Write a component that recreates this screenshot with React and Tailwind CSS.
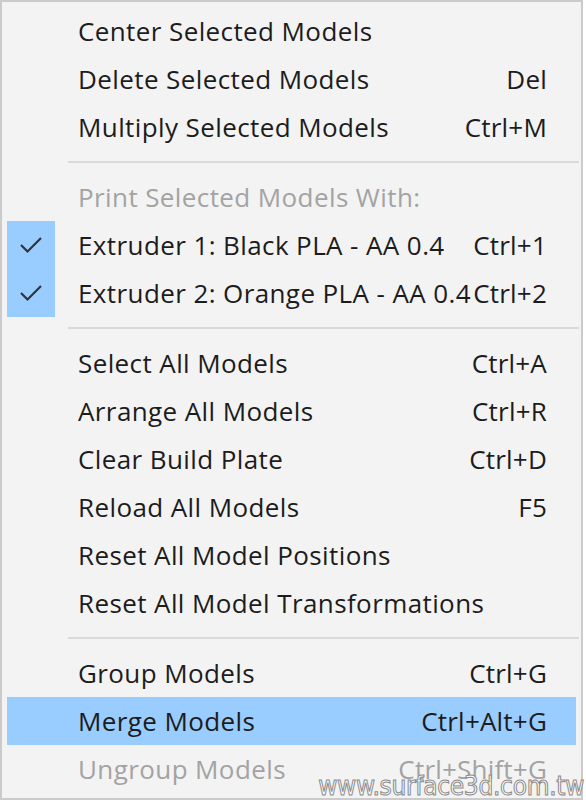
import React from 'react';

const items = [
    { label: 'Center Selected Models' },
    { label: 'Delete Selected Models', shortcut: 'Del' },
    { label: 'Multiply Selected Models', shortcut: 'Ctrl+M' },
    { sep: true },
    { label: 'Print Selected Models With:', disabled: true },
    { label: 'Extruder 1: Black PLA - AA 0.4', shortcut: 'Ctrl+1', checked: true },
    { label: 'Extruder 2: Orange PLA - AA 0.4', shortcut: 'Ctrl+2', checked: true },
    { sep: true },
    { label: 'Select All Models', shortcut: 'Ctrl+A' },
    { label: 'Arrange All Models', shortcut: 'Ctrl+R' },
    { label: 'Clear Build Plate', shortcut: 'Ctrl+D' },
    { label: 'Reload All Models', shortcut: 'F5' },
    { label: 'Reset All Model Positions' },
    { label: 'Reset All Model Transformations' },
    { sep: true },
    { label: 'Group Models', shortcut: 'Ctrl+G' },
    { label: 'Merge Models', shortcut: 'Ctrl+Alt+G', active: true },
    { label: 'Ungroup Models', shortcut: 'Ctrl+Shift+G', disabled: true },
];

function Check() {
    return (
        <svg width="24" height="18" viewBox="0 0 24 18" fill="none">
            <polyline points="2,9 8.5,15.5 22,2" stroke="#333" strokeWidth="2.2" />
        </svg>
    );
}

function MenuRow({ item }) {
    const textColor = item.disabled ? 'text-[#a3a3a3]' : 'text-[#1c1c1c]';
    return (
        <div className={`h-[48px] mx-[5px] flex items-center ${item.active ? 'bg-[#99ccff]' : ''}`}>
            <div className={`w-[48px] h-full shrink-0 flex items-center justify-center ${item.checked ? 'bg-[#99ccff]' : ''}`}>
                {item.checked && <Check />}
            </div>
            <span className={`ml-[23px] flex-1 min-w-0 whitespace-nowrap ${textColor}`}>{item.label}</span>
            {item.shortcut && (
                <span className={`shrink-0 pr-[29px] whitespace-nowrap tracking-[0.2px] ${textColor}`}>{item.shortcut}</span>
            )}
        </div>
    );
}

export default function App() {
    return (
        <div className="w-[586px] h-[800px] bg-white relative overflow-hidden">
            <div
                className="w-[583px] h-[800px] border-2 border-[#cbcbcb] bg-[#f3f3f3] pt-[5px] text-[26px] leading-none tracking-[0.4px]"
                style={{ fontFamily: '"Open Sans", "Noto Sans", sans-serif' }}
            >
                {items.map((item, i) =>
                    item.sep ? (
                        <div key={i} className="h-[22px] flex items-center pl-[66px] pr-[2px]">
                            <div className="h-[2px] w-full bg-[#d9d9d9]" />
                        </div>
                    ) : (
                        <MenuRow key={i} item={item} />
                    )
                )}
            </div>
            {/* watermark */}
            <div
                className="absolute right-[2px] bottom-[1px] text-[26px] leading-none tracking-[-0.3px] text-white [-webkit-text-stroke:1px_#8a8a8a]"
                style={{ fontFamily: '"Liberation Sans Narrow", "DejaVu Sans Condensed", "Liberation Sans", sans-serif' }}
            >
                www.surface3d.com.tw
            </div>
        </div>
    );
}
